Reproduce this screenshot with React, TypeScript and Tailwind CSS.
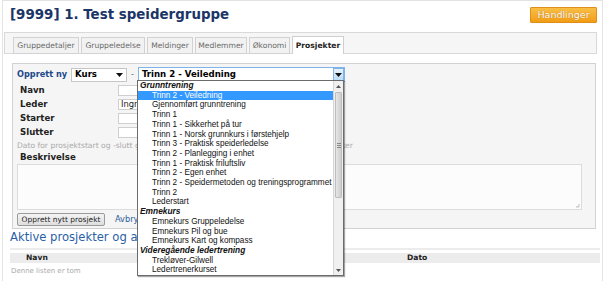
import React from 'react'

const TABS = [
  { label: 'Gruppedetaljer', w: 'w-[66px]' },
  { label: 'Gruppeledelse', w: 'w-[64px]' },
  { label: 'Meldinger', w: 'w-[46px]' },
  { label: 'Medlemmer', w: 'w-[52px]' },
  { label: 'Økonomi', w: 'w-[41px]' },
]

type Row = { text: string; group?: boolean; selected?: boolean }

const OPTIONS: Row[] = [
  { text: 'Grunntrening', group: true },
  { text: 'Trinn 2 - Veiledning', selected: true },
  { text: 'Gjennomført grunntrening' },
  { text: 'Trinn 1' },
  { text: 'Trinn 1 - Sikkerhet på tur' },
  { text: 'Trinn 1 - Norsk grunnkurs i førstehjelp' },
  { text: 'Trinn 3 - Praktisk speiderledelse' },
  { text: 'Trinn 2 - Planlegging i enhet' },
  { text: 'Trinn 1 - Praktisk friluftsliv' },
  { text: 'Trinn 2 - Egen enhet' },
  { text: 'Trinn 2 - Speidermetoden og treningsprogrammet' },
  { text: 'Trinn 2' },
  { text: 'Lederstart' },
  { text: 'Emnekurs', group: true },
  { text: 'Emnekurs Gruppeledelse' },
  { text: 'Emnekurs Pil og bue' },
  { text: 'Emnekurs Kart og kompass' },
  { text: 'Videregående ledertrening', group: true },
  { text: 'Trekløver-Gilwell' },
  { text: 'Ledertrenerkurset' },
]

const FIELDS = [
  { label: 'Navn', value: '' },
  { label: 'Leder', value: 'Ingrid Hansen' },
  { label: 'Starter', value: '' },
  { label: 'Slutter', value: '' },
]

function Caret() {
  return (
    <svg width="7" height="4" viewBox="0 0 7 4" className="shrink-0">
      <path d="M0 0h7L3.5 4z" fill="#111" />
    </svg>
  )
}

function CourseDropdown() {
  // open native-looking <select> list, lies over the form
  return (
    <div className="absolute left-[137px] top-[80px] flex h-[196px] w-[207px] border border-[#6b6b6b] bg-white shadow-[1px_1px_1px_rgba(0,0,0,0.35)]">
      <ul className="min-w-0 flex-1 overflow-hidden font-['Liberation_Sans',Arial,sans-serif] text-[8.2px] leading-[9.7px] text-[#111]">
        {OPTIONS.map((o) =>
          o.group ? (
            <li key={o.text} className="whitespace-nowrap pl-[2px] text-[8.4px] font-bold italic">
              {o.text}
            </li>
          ) : (
            <li
              key={o.text}
              className={
                o.selected
                  ? 'bg-[#3399ff] pl-[14px] text-white'
                  : 'whitespace-nowrap pl-[14px]'
              }
            >
              {o.text}
            </li>
          )
        )}
      </ul>
      <div className="flex w-[10px] shrink-0 flex-col border-l border-[#d6d6d6] bg-[#f0f0f0]">
        <div className="flex h-[10px] items-center justify-center">
          <svg width="5" height="3" viewBox="0 0 5 3">
            <path d="M0 3h5L2.5 0z" fill="#555" />
          </svg>
        </div>
        <div className="mx-[1px] mt-[1px] flex h-[106px] items-center justify-center rounded-[1px] border border-[#bdbdbd] bg-gradient-to-r from-[#e6e6e6] to-[#cdcdcd]">
          <div className="flex flex-col gap-[1px]">
            <div className="h-px w-[4px] bg-[#888]" />
            <div className="h-px w-[4px] bg-[#888]" />
            <div className="h-px w-[4px] bg-[#888]" />
          </div>
        </div>
        <div className="flex-1" />
        <div className="flex h-[9px] items-center justify-center">
          <svg width="5" height="3" viewBox="0 0 5 3">
            <path d="M0 0h5L2.5 3z" fill="#555" />
          </svg>
        </div>
      </div>
    </div>
  )
}

export default function App() {
  return (
    <div className="relative h-[281px] w-[605px] overflow-hidden bg-white font-['DejaVu_Sans',Verdana,sans-serif]">
      <div className="mx-[2px] h-full border-x border-t border-[#e3e3e3]">
        {/* header */}
        <div className="flex h-[30px] items-start justify-between pl-[7px] pr-[5px]">
          <h1 className="pt-[5px] text-[13.4px] font-bold leading-[18px] text-[#1b3567]">
            [9999] 1. Test speidergruppe
          </h1>
          <button className="mt-[6px] h-[16px] w-[67px] rounded-[1px] border border-[#e0901a] bg-gradient-to-b from-[#f9be45] to-[#f19d12] text-[9.5px] leading-[14px] text-white [text-shadow:0_0_1px_rgba(120,70,0,0.6)]">
            Handlinger
          </button>
        </div>

        {/* tabs */}
        <div className="ml-[1px] mt-[1px] flex h-[22px] w-[593px] items-end gap-[2px] border border-[#d9d9d9] bg-[#f6f6f6] pl-[8px]">
          {TABS.map((t) => (
            <div
              key={t.label}
              className={`${t.w} -mb-px flex h-[17px] items-center justify-center border border-[#d2d2d2] bg-[#f2f2f2] text-[7.6px] text-[#6a6a6a]`}
            >
              {t.label}
            </div>
          ))}
          <div className="-mb-px flex h-[18px] w-[52px] items-center justify-center border border-b-0 border-[#cfcfcf] bg-white text-[7.6px] font-bold text-[#222]">
            Prosjekter
          </div>
        </div>

        {/* create form */}
        <div className="ml-[9px] mt-[9px] flex h-[166px] w-[584px] flex-col border border-[#d2d2d2] bg-[#f5f5f5] pl-[4px]">
          <div className="mt-[3px] flex h-[15px] items-center">
            <span className="w-[54px] whitespace-nowrap text-[8.2px] font-bold text-[#1c4a8c]">Opprett ny</span>
            <div className="flex h-[14px] w-[56px] items-center justify-between border border-[#c6c6c6] bg-white pl-[3px] pr-[3px] text-[8.6px] font-bold">
              Kurs
              <Caret />
            </div>
            <span className="mx-[4px] text-[8px] text-[#666]">-</span>
            <div className="flex h-[15px] w-[207px] items-center justify-between border border-[#7eb4ea] bg-white pl-[3px] text-[8.6px] font-bold">
              Trinn 2 - Veiledning
              <div className="flex h-[13px] w-[11px] items-center justify-center border border-[#7eb4ea] bg-gradient-to-b from-[#e9f3fc] to-[#bcdcf6]">
                <Caret />
              </div>
            </div>
          </div>

          <div className="mt-[3px] flex flex-col gap-[3px]">
            {FIELDS.map((f) => (
              <div key={f.label} className="flex h-[11px] items-center">
                <span className="w-[101px] pl-[3px] text-[8.6px] font-bold text-[#222]">{f.label}</span>
                <div className="flex h-[11px] w-[150px] items-center overflow-hidden whitespace-nowrap border border-[#cfcfcf] bg-white pl-[2px] text-[8.4px] text-[#222]">
                  {f.value}
                </div>
              </div>
            ))}
          </div>

          <p className="mt-[3px] whitespace-nowrap text-[7.6px] leading-[10px] text-[#aaa]">
            Dato for prosjektstart og -slutt gjelder kun kurs som vises i aktivitetsoversikten og søker
          </p>
          <p className="mt-[1px] pl-[3px] text-[8.6px] font-bold leading-[11px] text-[#222]">Beskrivelse</p>
          <div className="relative mt-[1px] h-[46px] w-[565px] border border-[#dcdcdc] bg-[#fcfcfc]">
            <svg width="5" height="5" viewBox="0 0 5 5" className="absolute bottom-[1px] right-[1px]">
              <path d="M4 1v3M2 3v1M4 3H3M4 4H1" stroke="#bbb" strokeWidth="0.8" />
            </svg>
          </div>
          <div className="mt-[3px] flex items-center gap-[10px]">
            <button className="h-[13px] w-[88px] whitespace-nowrap rounded-[2px] border border-[#9a9a9a] bg-gradient-to-b from-[#f4f4f4] to-[#dedede] text-[7.5px] leading-[11px] text-[#222]">
              Opprett nytt prosjekt
            </button>
            <span className="text-[8.2px] text-[#2b5c9e]">Avbryt</span>
          </div>
        </div>

        {/* list */}
        <h2 className="ml-[7px] mt-0 whitespace-nowrap text-[11.6px] leading-[16px] text-[#2a5fa6]">
          Aktive prosjekter og aktiviteter
        </h2>
        <div className="ml-[7px] mt-[3px] h-[2px] w-[590px] bg-[#ececec]" />
        <div className="ml-[7px] mt-[3px] flex h-[10px] w-[590px] items-center bg-[#ececec] text-[7.6px] font-bold text-[#222]">
          <span className="w-[397px] pl-[16px]">Navn</span>
          <span>Dato</span>
        </div>
        <p className="ml-[8px] mt-[3px] text-[7px] text-[#aaa]">Denne listen er tom</p>
      </div>
      <CourseDropdown />
    </div>
  )
}
